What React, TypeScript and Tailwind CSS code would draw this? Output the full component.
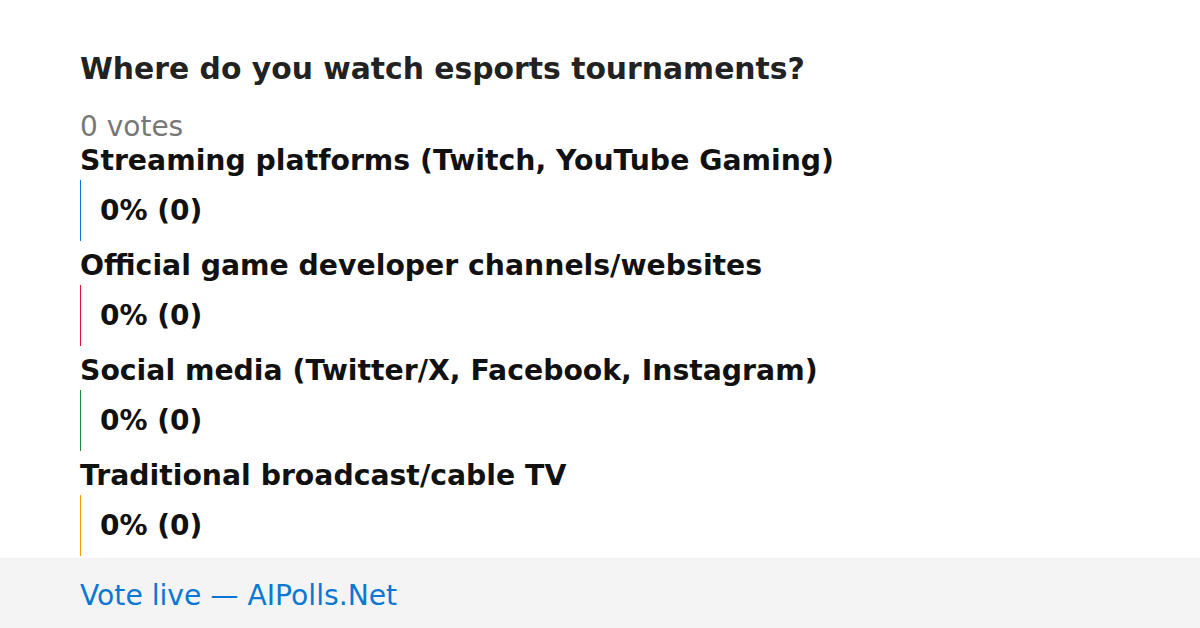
import React from "react";

const options = [
  { label: "Streaming platforms (Twitch, YouTube Gaming)", color: "bg-[#0b78d4]" },
  { label: "Official game developer channels/websites", color: "bg-[#e0173c]" },
  { label: "Social media (Twitter/X, Facebook, Instagram)", color: "bg-[#1b8a3c]" },
  { label: "Traditional broadcast/cable TV", color: "bg-[#f59a00]" },
];

export default function App() {
  return (
    <div className="w-[1200px] h-[628px] flex flex-col bg-white overflow-hidden font-['DejaVu_Sans',sans-serif]">
      {/* ── POLL ── */}
      <div className="flex-1 overflow-hidden px-[80px] pt-[49px]">
        <h1 className="text-[29.8px] leading-[40px] font-bold text-[#222]">Where do you watch esports tournaments?</h1>
        <p className="mt-[23px] text-[28px] leading-[30px] text-[#777]">0 votes</p>
        {options.map((o, i) => (
          <div key={i} className="mb-[6px]">
            <div className="h-[38px] flex items-center text-[28.3px] font-bold text-[#111] whitespace-nowrap">{o.label}</div>
            <div className="h-[61px] flex items-center">
              <div className={`w-px h-full ${o.color}`} />
              <span className="pl-[19px] text-[28px] font-bold text-[#111]">0% (0)</span>
            </div>
          </div>
        ))}
      </div>

      {/* ── FOOTER ── */}
      <div className="h-[70px] shrink-0 bg-[#f4f4f4] flex items-center px-[80px] pt-[6px]">
        <span className="text-[28.2px] text-[#0a78d2]">Vote live — AIPolls.Net</span>
      </div>
    </div>
  );
}
